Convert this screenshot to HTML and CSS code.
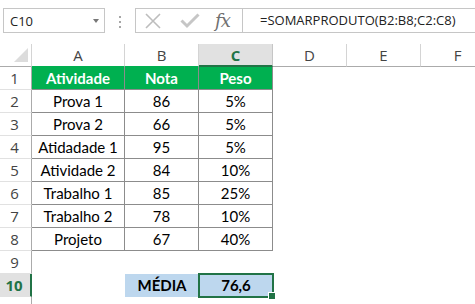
FILE: index.html
```html
<!DOCTYPE html>
<html lang="pt">
<head>
    <meta charset="UTF-8">
    <title>Planilha - Média ponderada</title>
    <link rel="stylesheet" href="styles.css">
</head>
<body>

    <div class="formula-bar">
        <div class="name-box"><span>C10</span><span class="caret"></span></div>
        <div class="grip"><span></span><span></span><span></span></div>
        <div class="fx-tools">
            <svg class="icon-x" width="16" height="16" viewBox="0 0 16 16"><path d="M1 1L15 15M15 1L1 15" stroke="#bdbdbd" stroke-width="1.6" fill="none"/></svg>
            <svg class="icon-check" width="20" height="16" viewBox="0 0 20 16"><path d="M1.5 7.5L7 13L18.5 1.5" stroke="#c6c6c6" stroke-width="3" fill="none"/></svg>
            <span class="fx">fx</span>
        </div>
        <div class="formula">=SOMARPRODUTO(B2:B8;C2:C8)</div>
    </div>

    <div class="sheet">
        <!-- cabeçalho de colunas -->
        <div class="corner"><span class="triangle"></span></div>
        <div class="col-head on-green">A</div>
        <div class="col-head on-green">B</div>
        <div class="col-head active">C</div>
        <div class="col-head">D</div>
        <div class="col-head">E</div>
        <div class="col-head">F</div>

        <div class="row-head">1</div>
        <div class="cell th">Atividade</div>
        <div class="cell th">Nota</div>
        <div class="cell th">Peso</div>
        <div></div><div></div><div></div>

        <div class="row-head">2</div>
        <div class="cell">Prova 1</div>
        <div class="cell">86</div>
        <div class="cell">5%</div>
        <div></div><div></div><div></div>

        <div class="row-head">3</div>
        <div class="cell">Prova 2</div>
        <div class="cell">66</div>
        <div class="cell">5%</div>
        <div></div><div></div><div></div>

        <div class="row-head">4</div>
        <div class="cell">Atidadade 1</div>
        <div class="cell">95</div>
        <div class="cell">5%</div>
        <div></div><div></div><div></div>

        <div class="row-head">5</div>
        <div class="cell">Atividade 2</div>
        <div class="cell">84</div>
        <div class="cell">10%</div>
        <div></div><div></div><div></div>

        <div class="row-head">6</div>
        <div class="cell">Trabalho 1</div>
        <div class="cell">85</div>
        <div class="cell">25%</div>
        <div></div><div></div><div></div>

        <div class="row-head">7</div>
        <div class="cell">Trabalho 2</div>
        <div class="cell">78</div>
        <div class="cell">10%</div>
        <div></div><div></div><div></div>

        <div class="row-head">8</div>
        <div class="cell">Projeto</div>
        <div class="cell">67</div>
        <div class="cell">40%</div>
        <div></div><div></div><div></div>

        <div class="row-head">9</div>
        <div></div><div></div><div></div><div></div><div></div><div></div>

        <div class="row-head active">10</div>
        <div></div>
        <div class="total-label">MÉDIA</div>
        <div class="total-value">76,6<span class="handle"></span></div>
        <div></div><div></div><div></div>

        <div class="row-head">11</div>
        <div></div><div></div><div></div><div></div><div></div><div></div>
    </div>

</body>
</html>
```

FILE: styles.css
```css
body {
    margin: 0;
    background-color: #fff;
    overflow: hidden;
    font-family: 'Open Sans', 'Noto Sans', sans-serif;
}

/* barra de fórmulas */

.formula-bar {
    display: flex;
    align-items: flex-start;
    height: 44px;
    box-sizing: border-box;
    padding: 8px 0 0 3px;
    font-size: 13px;
    color: #222;
}

.name-box {
    display: flex;
    align-items: center;
    width: 102px;
    height: 25px;
    box-sizing: border-box;
    border: 1px solid #c6c6c6;
    padding-left: 6px;
}

.caret {
    margin-left: auto;
    margin-right: 5px;
    width: 0;
    height: 0;
    border-left: 3.5px solid transparent;
    border-right: 3.5px solid transparent;
    border-top: 4px solid #777;
}

.grip {
    display: flex;
    flex-direction: column;
    gap: 3px;
    margin: 8px 0 0 14px;
}

.grip span {
    width: 2px;
    height: 2px;
    background-color: #a6a6a6;
}

.fx-tools {
    display: flex;
    align-items: center;
    width: 107px;
    height: 25px;
    box-sizing: border-box;
    margin-left: 14px;
    border: 1px solid #c6c6c6;
    border-right: none;
    padding-left: 9px;
}

.icon-check {
    margin-left: 19px;
}

.fx {
    margin-left: 15px;
    font-family: 'DejaVu Serif', 'Liberation Serif', serif;
    font-style: italic;
    font-size: 18px;
    color: #707070;
    letter-spacing: -1px;
}

.formula {
    flex: 1;
    height: 25px;
    line-height: 23px;
    box-sizing: border-box;
    border: 1px solid #c6c6c6;
    border-right: none;
    padding-left: 17px;
    white-space: nowrap;
}

/* grade da planilha */

.sheet {
    display: grid;
    grid-template-columns: 32px 93px 74px 74px 74px 74px 74px;
    grid-auto-rows: 23px;
}

.sheet > div {
    box-sizing: border-box;
}

.corner {
    display: flex;
    justify-content: flex-end;
    align-items: flex-end;
    padding: 0 3px 4px 0;
    border-right: 1px solid #d4d4d4;
    border-bottom: 1px solid #ababab;
}

.triangle {
    width: 0;
    height: 0;
    border-left: 14px solid transparent;
    border-bottom: 14px solid #dcdcdc;
}

.col-head {
    text-align: center;
    line-height: 22px;
    font-size: 15px;
    color: #444;
    border-right: 1px solid #d4d4d4;
    border-bottom: 1px solid #ababab;
}

.col-head.on-green {
    border-bottom-color: #00b050;
}

.col-head.active {
    background-color: #e1e1e1;
    color: #217346;
    font-weight: bold;
    border-right-color: #c6c6c6;
    border-bottom: 2px solid #217346;
}

.row-head {
    text-align: center;
    padding-right: 2px;
    line-height: 22px;
    font-size: 15px;
    color: #444;
    border-right: 1px solid #ababab;
    border-bottom: 1px solid #e1e1e1;
}

.row-head.active {
    background-color: #e1e1e1;
    color: #217346;
    font-weight: bold;
    border-right: 2px solid #217346;
}

.cell {
    text-align: center;
    line-height: 22px;
    font-family: Lato, 'Open Sans', sans-serif;
    font-size: 15px;
    color: #000;
    border-right: 1px solid #8c8c8c;
    border-bottom: 1px solid #8c8c8c;
    white-space: nowrap;
}

.cell.th {
    background-color: #00b050;
    color: #fff;
    font-weight: bold;
}

.total-label,
.total-value {
    text-align: center;
    line-height: 22px;
    font-family: Lato, 'Open Sans', sans-serif;
    font-size: 15px;
    font-weight: bold;
    color: #000;
    background-color: #bdd7ee;
}

.total-value {
    position: relative;
    outline: 2px solid #217346;
    outline-offset: -1px;
}

.handle {
    position: absolute;
    right: -2px;
    bottom: -2px;
    width: 6px;
    height: 6px;
    background-color: #217346;
    border-left: 1px solid #fff;
    border-top: 1px solid #fff;
}
```
